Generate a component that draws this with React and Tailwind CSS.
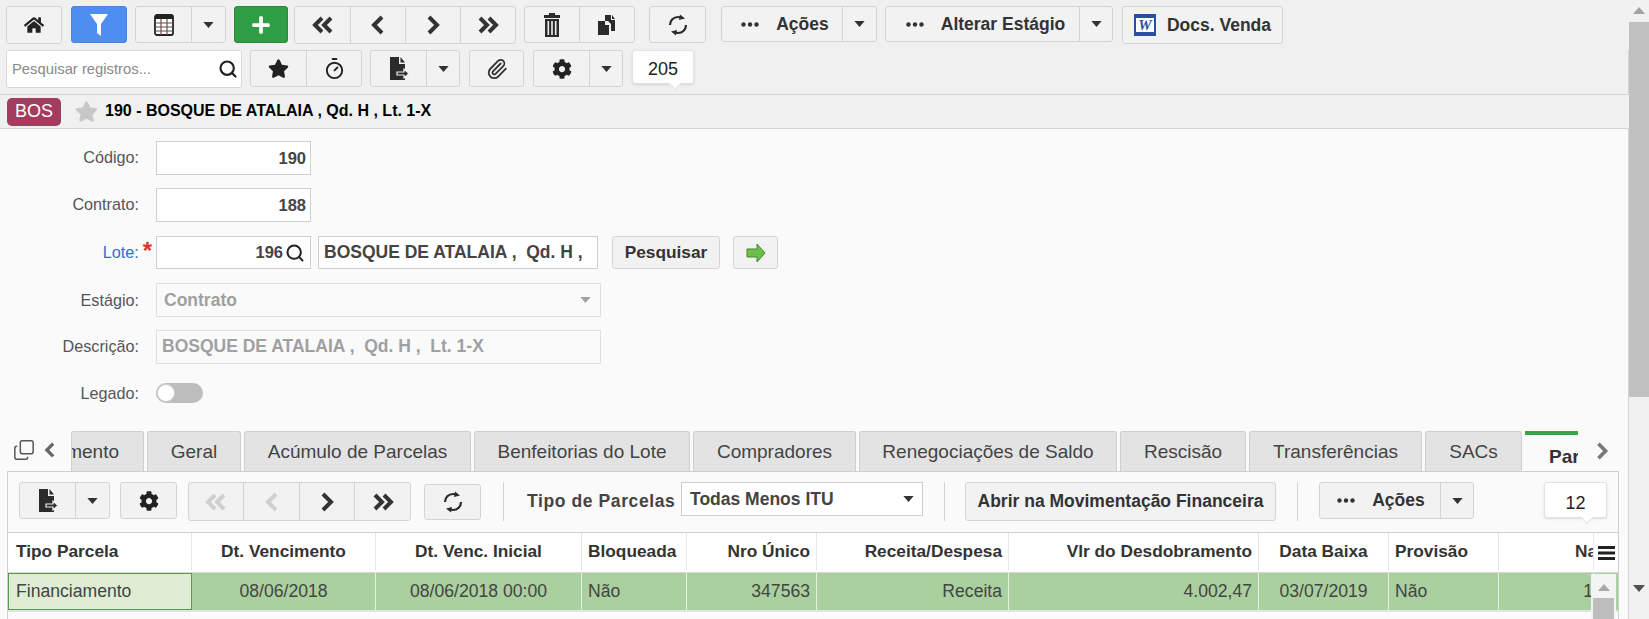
import React from "react";
import { FaHome, FaPlus, FaStar, FaCog } from "react-icons/fa";
import { Paperclip, Search, Copy, Timer } from "lucide-react";

const Caret = ({ c = "#333" }) => (
  <svg width="11" height="6" viewBox="0 0 12 7"><path d="M0 0h12L6 7z" fill={c} /></svg>
);
const Chev = ({ d = "r", dbl, c = "#333", s = 20 }) => (
  <svg width={dbl ? s + 4 : s} height={s} viewBox={dbl ? "0 0 24 20" : "0 0 20 20"} fill="none" stroke={c} strokeWidth="4">
    {dbl ? (
      d === "l" ? (
        <path d="M11 3L4 10l7 7M20 3l-7 7 7 7" />
      ) : (
        <path d="M4 3l7 7-7 7M13 3l7 7-7 7" />
      )
    ) : d === "l" ? (
      <path d="M14 2l-8 8 8 8" />
    ) : (
      <path d="M6 2l8 8-8 8" />
    )}
  </svg>
);
const Dots = () => (
  <svg width="18" height="5" viewBox="0 0 18 5" fill="#333">
    <circle cx="2.500" cy="2.500" r="2.200" /><circle cx="9" cy="2.500" r="2.200" /><circle cx="15.500" cy="2.500" r="2.200" />
  </svg>
);
const Grid = () => (
  <svg width="20" height="22" viewBox="0 0 20 22">
    <rect x="1" y="1" width="18" height="20" rx="2" fill="#fff" stroke="#222" strokeWidth="1.800" />
    <rect x="1" y="1" width="18" height="4" fill="#222" />
    <path d="M1 9h18M1 13h18M1 17h18" stroke="#555" strokeWidth="1.200" />
    <path d="M7 5v16M13 5v16" stroke="#7a4a4a" strokeWidth="1.200" />
  </svg>
);
const Docs = () => (
  <svg width="20" height="22" viewBox="0 0 20 22" fill="#2b2b2b">
    <path d="M8 1h6v5h4v11h-4v-7l-3-3H8z" />
    <path d="M15 1l3 4h-3z" />
    <path d="M1 7h7v4h4v10H1z" />
  </svg>
);
const Trash = () => (
  <svg width="18" height="24" viewBox="0 0 18 24" fill="#2b2b2b">
    <path d="M6 0h6v2h5v3H1V2h5z" />
    <path d="M2 6h14v18H2zM4.500 8v14h1.600V8zM8.200 8v14h1.600V8zM11.900 8v14h1.600V8z" fillRule="evenodd" />
  </svg>
);
const FileExp = () => (
  <svg width="20" height="23" viewBox="0 0 20 23">
    <path d="M1 0h9v7h6v16H1z" fill="#2b2b2b" />
    <path d="M11.500 0L16 5.500h-4.500z" fill="#2b2b2b" />
    <path d="M8 15h7v-3l5 4.500-5 4.500v-3H8z" fill="#2b2b2b" stroke="#f2f2f2" strokeWidth="1.200" />
  </svg>
);
const Refresh = () => (
  <svg width="20" height="24" viewBox="0 0 20 24" fill="none" stroke="#2b2b2b" strokeWidth="2.200">
    <path d="M2 12c0-4.500 3.500-8 8-8 1.500 0 3 .4 4 1.200" />
    <path d="M18 12c0 4.500-3.500 8-8 8-1.500 0-3-.4-4-1.200" />
    <path d="M12 1.500l5 4-6 1.500zM8 22.500l-5-4 6-1.500z" fill="#2b2b2b" stroke="none" />
  </svg>
);
const Word = () => (
  <svg width="22" height="22" viewBox="0 0 22 22">
    <rect width="22" height="22" fill="#2a4f9e" />
    <rect x="2" y="4" width="18" height="14" fill="#fff" />
    <text x="11" y="16" textAnchor="middle" fontFamily="Liberation Serif" fontWeight="700" fontStyle="italic" fontSize="15" fill="#2a4f9e">W</text>
  </svg>
);
const GreenArrow = () => (
  <svg width="20" height="20" viewBox="0 0 20 20">
    <path d="M1 6h10V1l8 9-8 9v-5H1z" fill="#6cc04a" stroke="#3f8a2a" strokeWidth="1" />
  </svg>
);
const Funnel = () => (
  <svg width="18" height="22" viewBox="0 0 18 22"><path d="M0 0h18L11 10v12l-4-3V10z" fill="#fff" /></svg>
);

const Group = ({ className = "", children }) => (
  <div className={"flex bg-[#f2f2f2] border border-[#d4d4d4] rounded-[3px] text-[#333] " + className}>{children}</div>
);
const Seg = ({ className = "", children }) => (
  <div className={"flex items-center justify-center border-r border-[#d4d4d4] last:border-r-0 " + className}>{children}</div>
);
const Tip = ({ className = "", children }) => (
  <div className={"relative flex items-center justify-center bg-white rounded-[3px] border border-[#e2e2e2] shadow-sm text-[18px] text-[#222] " + className}>
    {children}
    <span className="absolute left-[37px] bottom-[-5px] w-[10px] h-[10px] rotate-45 bg-white border-r border-b border-[#e2e2e2]" />
  </div>
);
const Label = ({ children, className = "" }) => (
  <div className={"w-[139px] text-right text-[16.2px] text-[#555] " + className}>{children}</div>
);
const Tab = ({ className = "", children }) => (
  <div className={"flex items-center justify-center h-[40px] pt-[2px] shrink-0 bg-[#e3e3e3] border border-b-0 border-[#cfcfcf] rounded-t-[3px] text-[19px] text-[#444] " + className}>{children}</div>
);
const Th = ({ className = "", children }) => (
  <div className={"shrink-0 flex items-center h-[37px] px-[6px] border-r border-[#e6e6e6] text-[17.3px] font-bold text-[#333] whitespace-nowrap overflow-hidden " + className}>{children}</div>
);
const Td = ({ className = "", children }) => (
  <div className={"shrink-0 flex items-center h-[37px] px-[6px] border-r border-[#e8f0e4] text-[17.6px] text-[#444] whitespace-nowrap overflow-hidden " + className}>{children}</div>
);

export default function App() {
  return (
    <div className="flex h-[619px] w-[1649px] overflow-hidden bg-[#f0f0f0] font-['Liberation_Sans',Arial,sans-serif]">
      <div className="w-[1629px] shrink-0 flex flex-col">
        {/* Toolbar row 1 */}
        <div className="flex items-start pt-[6px] pl-[6px] h-[50px] shrink-0">
          <Group className="w-[56px] h-[38px] items-center justify-center"><FaHome size={20} color="#222" /></Group>
          <div className="ml-[9px] w-[56px] h-[37px] rounded-[3px] bg-[#4d8ef0] border border-[#4a86e0] flex items-center justify-center"><Funnel /></div>
          <Group className="ml-[8px] w-[91px] h-[37px]">
            <Seg className="w-[56px]"><Grid /></Seg>
            <Seg className="flex-1"><Caret /></Seg>
          </Group>
          <div className="ml-[8px] w-[54px] h-[37px] rounded-[3px] bg-[#2f9e44] border border-[#2a8a3c] flex items-center justify-center"><FaPlus size={20} color="#fff" /></div>
          <Group className="ml-[6px] w-[222px] h-[38px]">
            <Seg className="w-[56px]"><Chev d="l" dbl /></Seg>
            <Seg className="w-[55px]"><Chev d="l" /></Seg>
            <Seg className="w-[55px]"><Chev /></Seg>
            <Seg className="flex-1"><Chev dbl /></Seg>
          </Group>
          <Group className="ml-[8px] w-[111px] h-[37px]">
            <Seg className="w-[55px]"><Trash /></Seg>
            <Seg className="flex-1"><Docs /></Seg>
          </Group>
          <Group className="ml-[14px] w-[57px] h-[37px] items-center justify-center"><Refresh /></Group>
          <Group className="ml-[15px] w-[156px] h-[36px] font-bold text-[17.5px]">
            <Seg className="w-[121px] gap-[17px] pl-[6px]"><Dots /><span>Ações</span></Seg>
            <Seg className="flex-1"><Caret /></Seg>
          </Group>
          <Group className="ml-[8px] w-[228px] h-[36px] font-bold text-[17.5px]">
            <Seg className="w-[194px] gap-[17px] pl-[6px]"><Dots /><span>Alterar Estágio</span></Seg>
            <Seg className="flex-1"><Caret /></Seg>
          </Group>
          <Group className="ml-[9px] w-[161px] h-[38px] font-bold text-[17.5px] items-center justify-center gap-[11px]"><Word /><span>Docs. Venda</span></Group>
        </div>
        {/* Toolbar row 2 */}
        <div className="flex items-start pl-[6px] h-[45px] shrink-0 border-b border-[#d4d4d4] border-r">
          <div className="w-[236px] h-[38px] bg-white border border-[#d8d8d8] rounded-[3px] flex items-center justify-between pl-[5px] pr-[3px]">
            <span className="text-[14.8px] text-[#8a8a8a]">Pesquisar registros...</span>
            <Search size={20} strokeWidth={2.6} color="#222" />
          </div>
          <Group className="ml-[8px] w-[112px] h-[37px]">
            <Seg className="w-[56px]"><FaStar size={21} color="#222" /></Seg>
            <Seg className="flex-1"><Timer size={23} strokeWidth={2} color="#222" /></Seg>
          </Group>
          <Group className="ml-[8px] w-[90px] h-[37px]">
            <Seg className="w-[56px]"><FileExp /></Seg>
            <Seg className="flex-1"><Caret /></Seg>
          </Group>
          <Group className="ml-[9px] w-[55px] h-[37px] items-center justify-center"><Paperclip size={22} color="#333" /></Group>
          <Group className="ml-[9px] w-[90px] h-[37px]">
            <Seg className="w-[56px]"><FaCog size={20} color="#222" /></Seg>
            <Seg className="flex-1"><Caret /></Seg>
          </Group>
          <Tip className="ml-[9px] w-[62px] h-[34px] pt-[4px]">205</Tip>
        </div>
        {/* Title */}
        <div className="flex items-center h-[34px] shrink-0 border-b border-[#d4d4d4] pl-[7px]">
          <span className="w-[54px] h-[28px] rounded-[5px] bg-[#a33c5e] text-white text-[18px] flex items-center justify-center">BOS</span>
          <FaStar size={23} color="#c8c8c8" className="ml-[14px]" />
          <span className="ml-[7px] pb-[2px] text-[16px] font-bold text-black whitespace-pre">190 - BOSQUE DE ATALAIA , Qd. H , Lt. 1-X</span>
        </div>
        {/* Body */}
        <div className="flex-1 min-h-0 bg-[#fafafa] border-r border-[#d4d4d4] overflow-hidden">
          <div className="flex flex-col pt-[12px] h-[302px]">
            <div className="flex items-center h-[34px]">
              <Label className="pb-[2px]">Código:</Label>
              <div className="ml-[17px] w-[155px] h-[34px] bg-white border border-[#cfcfcf] flex items-center justify-end pr-[4px] text-[16.500px] font-bold text-[#444]">190</div>
            </div>
            <div className="flex items-center h-[34px] mt-[13px]">
              <Label className="pb-[2px]">Contrato:</Label>
              <div className="ml-[17px] w-[155px] h-[34px] bg-white border border-[#cfcfcf] flex items-center justify-end pr-[4px] text-[16.500px] font-bold text-[#444]">188</div>
            </div>
            <div className="flex items-center h-[33px] mt-[14px]">
              <div className="w-[152px] flex justify-end items-start gap-[4px] text-[16.2px]">
                <span className="text-[#2b6fd6]">Lote:</span>
                <span className="text-[#d9342b] text-[24px] leading-[22px] font-bold">*</span>
              </div>
              <div className="ml-[4px] w-[155px] h-[33px] bg-white border border-[#cfcfcf] flex items-center justify-end pr-[5px] gap-[2px] text-[16.500px] font-bold text-[#444]">196<Search size={20} strokeWidth={2.4} color="#222" /></div>
              <div className="ml-[7px] w-[280px] h-[33px] bg-white border border-[#cfcfcf] flex items-center pl-[5px] text-[17.5px] font-bold text-[#444] whitespace-pre">BOSQUE DE ATALAIA ,  Qd. H ,</div>
              <Group className="ml-[14px] w-[108px] h-[33px] items-center justify-center font-bold text-[17.3px]">Pesquisar</Group>
              <Group className="ml-[13px] w-[45px] h-[33px] items-center justify-center"><GreenArrow /></Group>
            </div>
            <div className="flex items-center h-[34px] mt-[14px]">
              <Label>Estágio:</Label>
              <div className="ml-[17px] w-[445px] h-[34px] border border-[#e0e0e0] flex items-center justify-between pl-[7px] pr-[9px] text-[17.5px] font-bold text-[#a0a0a0]">Contrato<Caret c="#a0a0a0" /></div>
            </div>
            <div className="flex items-center h-[34px] mt-[13px]">
              <Label className="pb-[2px]">Descrição:</Label>
              <div className="ml-[17px] w-[445px] h-[34px] border border-[#e0e0e0] flex items-center pl-[5px] pb-[2px] text-[17.5px] font-bold text-[#a0a0a0] whitespace-pre">BOSQUE DE ATALAIA ,  Qd. H ,  Lt. 1-X</div>
            </div>
            <div className="flex items-center h-[34px] mt-[12px]">
              <Label>Legado:</Label>
              <div className="ml-[17px] w-[47px] h-[20px] rounded-full bg-[#bdbdbd] flex items-center">
                <span className="w-[18px] h-[18px] ml-[1px] rounded-full bg-white border border-[#cfcfcf]" />
              </div>
            </div>
          </div>
          {/* Tabs */}
          <div className="flex h-[40px] items-center">
            <div className="w-[71px] shrink-0 flex items-center pl-[13px] gap-[7px] pb-[2px]">
              <Copy size={22} strokeWidth={1.6} color="#555" className="-scale-x-100 rotate-180" />
              <Chev d="l" c="#666" s={16} />
            </div>
            <div className="w-[1507px] shrink-0 flex overflow-hidden gap-[3px]">
              <Tab className="w-[73px] !justify-end pr-[24px] overflow-hidden whitespace-nowrap">Fechamento</Tab>
              <Tab className="w-[94px]">Geral</Tab>
              <Tab className="w-[227px]">Acúmulo de Parcelas</Tab>
              <Tab className="w-[216px]">Benfeitorias do Lote</Tab>
              <Tab className="w-[163px]">Compradores</Tab>
              <Tab className="w-[258px]">Renegociações de Saldo</Tab>
              <Tab className="w-[126px]">Rescisão</Tab>
              <Tab className="w-[173px]">Transferências</Tab>
              <Tab className="w-[97px]">SACs</Tab>
              <div className="w-[100px] shrink-0 h-[40px] bg-[#fafafa] border-t-[4px] border-[#33a74a] pl-[24px] pt-[8px] text-[19px] font-bold text-[#333] whitespace-nowrap">Parcelas</div>
            </div>
            <div className="ml-[15px]"><Chev c="#777" s={18} /></div>
          </div>
          {/* Panel */}
          <div className="relative ml-[7px] w-[1612px] h-[200px] border-x border-t border-[#cfcfcf] bg-[#fafafa]">
            <div className="flex items-start h-[61px] pt-[10px] pl-[11px] border-b border-[#cfcfcf]">
              <Group className="w-[91px] h-[37px]">
                <Seg className="w-[56px]"><FileExp /></Seg>
                <Seg className="flex-1"><Caret /></Seg>
              </Group>
              <Group className="ml-[10px] w-[57px] h-[37px] items-center justify-center"><FaCog size={20} color="#222" /></Group>
              <Group className="ml-[11px] w-[223px] h-[39px]">
                <Seg className="w-[55px]"><Chev d="l" dbl c="#cfcfcf" /></Seg>
                <Seg className="w-[56px]"><Chev d="l" c="#cfcfcf" /></Seg>
                <Seg className="w-[55px]"><Chev /></Seg>
                <Seg className="flex-1"><Chev dbl /></Seg>
              </Group>
              <Group className="ml-[13px] mt-[2px] w-[57px] h-[36px] items-center justify-center"><Refresh /></Group>
              <div className="ml-[22px] w-px h-[39px] bg-[#d4d4d4]" />
              <span className="ml-[23px] mt-[6px] w-[148px] text-[17.5px] tracking-[0.6px] font-bold text-[#444] whitespace-nowrap">Tipo de Parcelas</span>
              <div className="ml-[6px] w-[242px] h-[34px] bg-white border border-[#cfcfcf] flex items-center justify-between pl-[8px] pr-[8px] text-[17.5px] font-bold text-[#444]">Todas Menos ITU<Caret /></div>
              <div className="ml-[21px] w-px h-[39px] bg-[#d4d4d4]" />
              <Group className="ml-[20px] w-[311px] h-[39px] items-center justify-center font-bold text-[17.5px] whitespace-nowrap">Abrir na Movimentação Financeira</Group>
              <div className="ml-[21px] w-px h-[39px] bg-[#d4d4d4]" />
              <Group className="ml-[21px] w-[155px] h-[37px] font-bold text-[17.5px]">
                <Seg className="w-[121px] gap-[17px] pl-[2px]"><Dots /><span>Ações</span></Seg>
                <Seg className="flex-1"><Caret /></Seg>
              </Group>
              <Tip className="ml-[70px] w-[63px] h-[36px] pt-[6px]">12</Tip>
            </div>
            <div className="flex h-[40px] border-b border-[#d8d8d8] bg-white overflow-hidden">
              <Th className="w-[184px] !pl-[8px]">Tipo Parcela</Th>
              <Th className="w-[184px] justify-center">Dt. Vencimento</Th>
              <Th className="w-[206px] justify-center">Dt. Venc. Inicial</Th>
              <Th className="w-[105px]">Bloqueada</Th>
              <Th className="w-[130px] justify-end">Nro Único</Th>
              <Th className="w-[192px] justify-end">Receita/Despesa</Th>
              <Th className="w-[250px] justify-end">Vlr do Desdobramento</Th>
              <Th className="w-[130px] justify-center">Data Baixa</Th>
              <Th className="w-[110px]">Provisão</Th>
              <Th className="w-[95px] !pl-[76px]">Natureza</Th>
              <div className="flex-1 flex items-center justify-center"><svg width="17" height="14" viewBox="0 0 17 14" fill="#222"><path d="M0 0h17v3H0zM0 5.500h17v3H0zM0 11h17v3H0z" /></svg></div>
            </div>
            <div className="flex h-[39px] border-b-[2px] border-[#e2e2ea] bg-[#a9d09e] overflow-hidden">
              <Td className="w-[184px] !pl-[7px] bg-[#deedd4] border !border-[#5a9a50]">Financiamento</Td>
              <Td className="w-[184px] justify-center">08/06/2018</Td>
              <Td className="w-[206px] justify-center">08/06/2018 00:00</Td>
              <Td className="w-[105px]">Não</Td>
              <Td className="w-[130px] justify-end">347563</Td>
              <Td className="w-[192px] justify-end">Receita</Td>
              <Td className="w-[250px] justify-end">4.002,47</Td>
              <Td className="w-[130px] justify-center">03/07/2019</Td>
              <Td className="w-[110px]">Não</Td>
              <Td className="w-[95px] justify-end !pr-0">1</Td>
            </div>
            {/* inner scrollbar */}
            <div className="absolute left-[1583px] top-[102px] w-[25px] h-[99px] bg-[#f4f4f4] flex flex-col items-center">
              <svg width="12" height="7" viewBox="0 0 12 7" className="mt-[10px]"><path d="M6 0l6 7H0z" fill="#a8a8a8" /></svg>
              <div className="mt-[7px] w-[21px] flex-1 bg-[#bdbdbd]" />
            </div>
          </div>
        </div>
      </div>
      {/* Page scrollbar */}
      <div className="w-[20px] shrink-0 flex flex-col items-center bg-[#f1f1f1]">
        <svg width="12" height="7" viewBox="0 0 12 7" className="mt-[7px]"><path d="M6 0l6 7H0z" fill="#a3a3a3" /></svg>
        <div className="mt-[8px] w-[20px] h-[375px] bg-[#c1c1c1]" />
        <svg width="12" height="7" viewBox="0 0 12 7" className="mt-[188px]"><path d="M0 0h12L6 7z" fill="#505050" /></svg>
      </div>
    </div>
  );
}
